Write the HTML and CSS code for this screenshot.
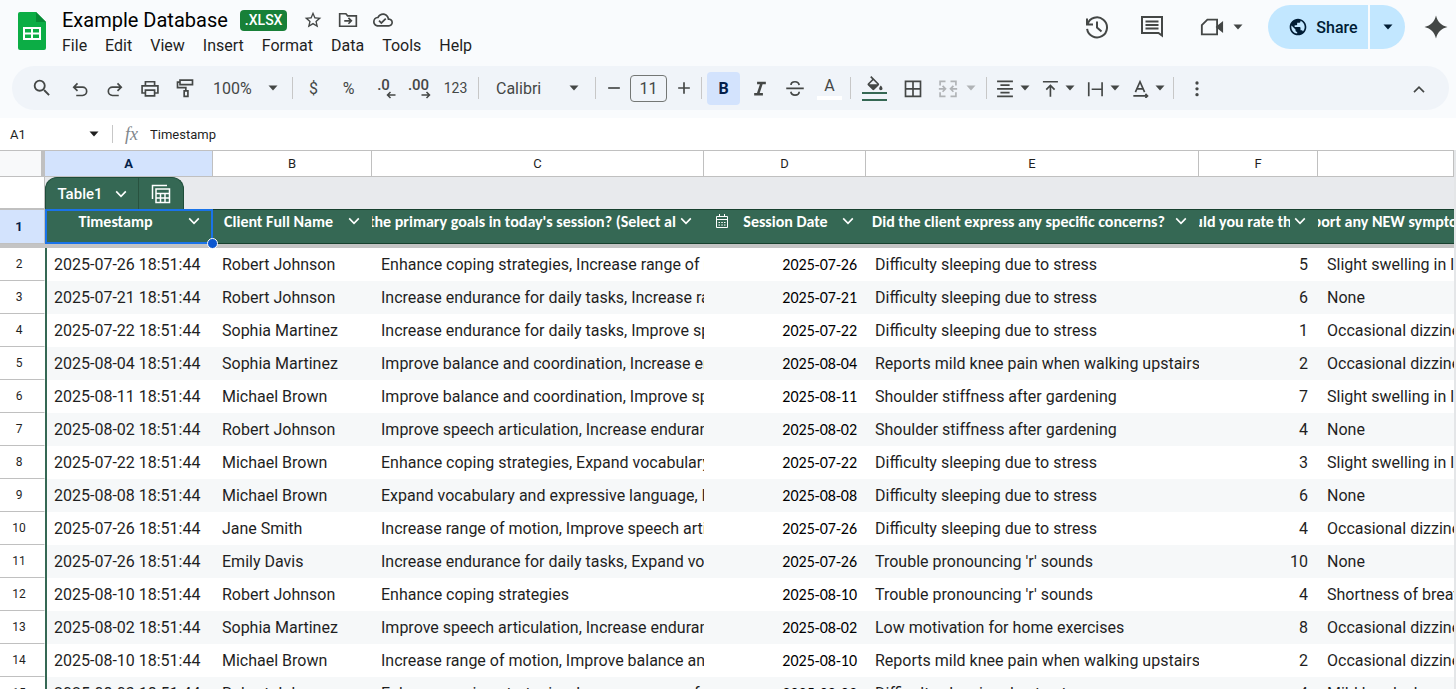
FILE: index.html
```html
<!DOCTYPE html>
<html lang="en">
<head>
  <meta charset="UTF-8">
  <meta name="viewport" content="width=device-width, initial-scale=1">
  <title>Example Database</title>
  <link rel="stylesheet" href="styles.css">
</head>
<body>
  <!-- shared icons -->
  <svg class="defs" aria-hidden="true">
    <symbol id="caret" viewBox="0 0 10 10"><path d="M0.5 2.5h9L5 7.5z" fill="currentColor"/></symbol>
    <symbol id="chevron" viewBox="0 0 12 12"><path d="M1.2 3.4 6 8.4l4.8-5" fill="none" stroke="currentColor" stroke-width="1.6"/></symbol>
  </svg>

  <header class="top">
    <svg class="logo" viewBox="0 0 28 38" aria-hidden="true">
      <path d="M2 0h16l10 10v26a2 2 0 0 1-2 2H2a2 2 0 0 1-2-2V2a2 2 0 0 1 2-2z" fill="#0cad45"/>
      <path d="M18 0l10 10H18z" fill="#078a35"/>
      <path d="M5 15h18v13H5zM7 17v3.500h6V17zm8 0v3.500h6V17zm-8 5.500V26h6v-3.500zm8 0V26h6v-3.500z" fill="#fff" fill-rule="evenodd"/>
    </svg>
    <div class="doc">
      <div class="doc-title">
        <h1>Example Database</h1>
        <span class="badge">.XLSX</span>
        <button class="mini" aria-label="Star"><svg viewBox="0 0 24 24"><path d="M22 9.24l-7.19-.62L12 2 9.19 8.63 2 9.24l5.46 4.73L5.82 21 12 17.27 18.18 21l-1.63-7.03L22 9.24zM12 15.4l-3.76 2.27 1-4.28-3.32-2.88 4.38-.38L12 6.100l1.71 4.040 4.38.38-3.32 2.88 1 4.280L12 15.4z"/></svg></button>
        <button class="mini" aria-label="Move"><svg class="line" viewBox="0 0 24 24"><path d="M2 5v14.500h20V7H11.500l-2-2.500H2zM7.500 13h8M12.500 9.500l3.500 3.500-3.500 3.500"/></svg></button>
        <button class="mini" aria-label="Saved"><svg viewBox="0 0 24 24"><path d="M19.35 10.04C18.67 6.59 15.64 4 12 4 9.11 4 6.6 5.64 5.35 8.04 2.34 8.36 0 10.91 0 14c0 3.31 2.69 6 6 6h13c2.76 0 5-2.24 5-5 0-2.64-2.05-4.78-4.65-4.96zM19 18H6c-2.21 0-4-1.79-4-4 0-2.05 1.53-3.76 3.56-3.97l1.07-.11.5-.95C8.08 7.14 9.94 6 12 6c2.62 0 4.88 1.86 5.39 4.43l.3 1.5 1.53.11c1.56.1 2.78 1.41 2.78 2.96 0 1.65-1.35 3-3 3zm-9-3.82l-2.09-2.09L6.5 13.5 10 17l6.010-6.010-1.410-1.410z"/></svg></button>
      </div>
      <nav class="menu">
        <a href="#">File</a>
        <a href="#">Edit</a>
        <a href="#">View</a>
        <a href="#">Insert</a>
        <a href="#">Format</a>
        <a href="#">Data</a>
        <a href="#">Tools</a>
        <a href="#">Help</a>
      </nav>
    </div>
    <div class="actions">
      <button class="action" aria-label="Version history"><svg class="line" viewBox="0 0 24 24"><path d="M2 3.500v6h6M2.500 9.300a10 10 0 1 1-.4 4.500M12 6.500v6l4.500 4"/></svg></button>
      <button class="action comments" aria-label="Comments"><svg class="line" viewBox="0 0 24 24"><path d="M2 2h20v18.500L18.500 18H2zM5.500 6.500h13M5.500 10h13M5.500 13.500h13"/></svg></button>
      <button class="action meet" aria-label="Join a call"><svg class="line" viewBox="0 0 26 24"><path d="M8 4h10.500v16H2V10z"/><path d="M18.500 12 24 7.500v9z" fill="currentColor"/></svg><svg class="caret"><use href="#caret"/></svg></button>
      <div class="share">
        <button class="share-main"><svg viewBox="0 0 24 24"><path d="M12 2C6.48 2 2 6.48 2 12s4.48 10 10 10 10-4.48 10-10S17.52 2 12 2zm-1 17.93c-3.95-.49-7-3.85-7-7.93 0-.62.08-1.21.21-1.79L9 15v1c0 1.1.9 2 2 2v1.93zm6.9-2.54c-.26-.81-1-1.39-1.9-1.39h-1v-3c0-.55-.45-1-1-1H8v-2h2c.55 0 1-.45 1-1V7h2c1.1 0 2-.9 2-2v-.41c2.93 1.19 5 4.06 5 7.41 0 2.08-.8 3.97-2.1 5.39z"/></svg>Share</button>
        <button class="share-more" aria-label="Sharing options"><svg class="caret"><use href="#caret"/></svg></button>
      </div>
      <button class="action spark" aria-label="Ask Gemini"><svg viewBox="0 0 24 24"><path d="M12 0.500C13.600 7 17 10.400 23.500 12 17 13.600 13.600 17 12 23.500 10.400 17 7 13.600.5 12 7 10.400 10.400 7 12 .5z"/></svg></button>
    </div>
  </header>

  <div class="toolbar" role="toolbar">
    <button class="tool search" aria-label="Search"><svg viewBox="0 0 24 24"><path d="M15.5 14h-.79l-.28-.27A6.47 6.47 0 0 0 16 9.5 6.5 6.5 0 1 0 9.5 16c1.61 0 3.09-.59 4.23-1.57l.27.28v.79l5 4.99L20.49 19l-4.99-5zm-6 0C7.01 14 5 11.99 5 9.5S7.01 5 9.5 5 14 7.01 14 9.5 11.99 14 9.5 14z"/></svg></button>
    <button class="tool" aria-label="Undo"><svg class="line" viewBox="0 0 24 24"><path d="M7.500 21H15a5 5 0 0 0 0-10H5M9 6.500 4.500 11 9 15.500"/></svg></button>
    <button class="tool" aria-label="Redo"><svg class="line" viewBox="0 0 24 24"><path d="M16.500 21H9a5 5 0 0 1 0-10h10M15 6.500l4.500 4.500-4.500 4.500"/></svg></button>
    <button class="tool" aria-label="Print"><svg class="line" viewBox="0 0 24 24"><path d="M6.500 9V4.500h11V9M6.500 18H2.500V9.500h19V18h-4M6.500 14.500h11v7h-11z"/></svg></button>
    <button class="tool" aria-label="Paint format"><svg class="line" viewBox="0 0 24 24"><path d="M6 2.500h15V8H6zM6 5H3v6.500h10V15M11 15.500h4.500v6.500H11z"/></svg></button>
    <button class="zoom-select">100%<svg class="caret"><use href="#caret"/></svg></button>
    <span class="sep"></span>
    <button class="tool" aria-label="Currency">$</button>
    <button class="tool" aria-label="Percent">%</button>
    <button class="tool decimal" aria-label="Decrease decimals">.0<svg class="line" viewBox="0 0 10 8"><path d="M9.500 4H1.500M4.500 1 1.500 4l3 3"/></svg></button>
    <button class="tool decimal" aria-label="Increase decimals">.00<svg class="line" viewBox="0 0 10 8"><path d="M.5 4h8M5.500 1l3 3-3 3"/></svg></button>
    <button class="tool formats" aria-label="More formats">123</button>
    <span class="sep"></span>
    <button class="font-select">Calibri<svg class="caret"><use href="#caret"/></svg></button>
    <span class="sep"></span>
    <button class="tool step" aria-label="Smaller"><svg class="line" viewBox="0 0 24 24"><path d="M5 12h14"/></svg></button>
    <input class="size" type="text" value="11" aria-label="Font size">
    <button class="tool step" aria-label="Larger"><svg class="line" viewBox="0 0 24 24"><path d="M5 12h14M12 5v14"/></svg></button>
    <span class="sep"></span>
    <button class="tool bold">B</button>
    <button class="tool" aria-label="Italic"><svg class="line heavy" viewBox="0 0 24 24"><path d="M8.500 6h10.500M5 19.500h10.500M14 6l-4.500 13.500"/></svg></button>
    <button class="tool" aria-label="Strikethrough"><svg class="line" viewBox="0 0 24 24"><path d="M1.500 12.500h21M17 8.500C16.500 5.500 14.500 4.500 12 4.500S7.200 5.800 7.200 8.500M7 16.500c.5 3 2.500 4 5 4s5-1.200 5-4"/></svg></button>
    <button class="tool text-color" aria-label="Text color">A</button>
    <span class="sep"></span>
    <button class="tool fill-color" aria-label="Fill color"><svg viewBox="0 0 24 18"><path d="M16.56 8.94L7.62 0 6.21 1.41l2.38 2.38-5.15 5.15c-.59.59-.59 1.54 0 2.12l5.500 5.500c.29.29.68.44 1.060.44s.77-.15 1.060-.44l5.500-5.500c.59-.58.59-1.53 0-2.120zM5.210 10L10 5.210 14.790 10H5.210zM19 11.500s-2 2.170-2 3.500c0 1.100.9 2 2 2s2-.9 2-2c0-1.330-2-3.500-2-3.500z"/></svg></button>
    <button class="tool borders" aria-label="Borders"><svg class="line" viewBox="0 0 24 24"><path d="M3 4h18v18H3zM12 4v18M3 13h18"/></svg></button>
    <button class="drop merge" aria-label="Merge cells" disabled><svg class="line" viewBox="0 0 24 24"><path d="M9 4H2.500v5M15 4h6.500v5M9 22H2.500v-5M15 22h6.500v-5M1 13h7M5.500 9.500 9 13l-3.500 3.500M23 13h-7M18.500 9.500 15 13l3.500 3.500"/></svg><svg class="caret"><use href="#caret"/></svg></button>
    <span class="sep"></span>
    <button class="drop" aria-label="Horizontal align"><svg class="line" viewBox="0 0 24 24"><path d="M2.500 4h19M6.500 8.500h11M2.500 13h19M6.500 17.500h11M2.500 22h19"/></svg><svg class="caret"><use href="#caret"/></svg></button>
    <button class="drop" aria-label="Vertical align"><svg class="line" viewBox="0 0 24 24"><path d="M3.500 4.500h18M12.500 22.500V9M7.500 14l5-5 5 5"/></svg><svg class="caret"><use href="#caret"/></svg></button>
    <button class="drop" aria-label="Text wrapping"><svg class="line" viewBox="0 0 24 24"><path d="M4.500 5v17M20.500 5v17M8 13.500H20"/></svg><svg class="caret"><use href="#caret"/></svg></button>
    <button class="drop" aria-label="Text rotation"><svg class="line" viewBox="0 0 24 24"><path d="M6.500 17 12 4.500 17.500 17M8.500 13h7M4 21.500h17M18.500 19l2.500 2.500-2.500 2.500"/></svg><svg class="caret"><use href="#caret"/></svg></button>
    <span class="sep"></span>
    <button class="tool more" aria-label="More"><svg viewBox="0 0 24 24"><circle cx="12" cy="6" r="2"/><circle cx="12" cy="13" r="2"/><circle cx="12" cy="20" r="2"/></svg></button>
    <button class="tool collapse" aria-label="Hide the menus"><svg class="line" viewBox="0 0 24 24"><path d="M6 17l6-6 6 6"/></svg></button>
  </div>

  <div class="formula-bar">
    <button class="name-box">A1<svg class="caret"><use href="#caret"/></svg></button>
    <label class="fx" for="formula">fx</label>
    <input class="formula" id="formula" type="text" value="Timestamp">
  </div>

  <table class="sheet">
    <colgroup>
      <col class="col-n"><col class="col-a"><col class="col-b"><col class="col-c"><col class="col-d"><col class="col-e"><col class="col-f"><col>
    </colgroup>
    <thead>
      <tr class="letters">
        <th class="corner"></th><th class="selected">A</th><th>B</th><th>C</th><th>D</th><th>E</th><th>F</th><th></th>
      </tr>
      <tr class="tab-row">
        <th></th>
        <td colspan="7">
          <div class="tab">
            <button class="tab-name">Table1<svg class="chevron"><use href="#chevron"/></svg></button>
            <button class="tab-icon" aria-label="Table view"><svg class="line" viewBox="0 0 20 20"><path d="M1.500 15V1.500H16M5 5h13.500v13.500H5zM5 9.500h13.500M5 14h13.500M9.500 9.500v9M14 9.500v9"/></svg></button>
          </div>
        </td>
      </tr>
      <tr class="fields">
        <th class="selected">1</th>
        <th class="active"><div class="field"><span>Timestamp</span><svg class="chevron"><use href="#chevron"/></svg></div><i class="handle"></i></th>
        <th><div class="field"><span>Client Full Name</span><svg class="chevron"><use href="#chevron"/></svg></div></th>
        <th><div class="field"><span>What were the primary goals in today's session? (Select all that apply)</span><svg class="chevron"><use href="#chevron"/></svg></div></th>
        <th><div class="field"><svg class="line calendar" viewBox="0 0 14 16"><path d="M1.500 3.500h11v11h-11zM1.500 6.500h11M4.500 1v2.500M9.500 1v2.500M3.500 9.500h1.500M6.300 9.500h1.500M9 9.500h1.500M3.500 12h1.500M6.300 12h1.500M9 12h1.500"/></svg><span>Session Date</span><svg class="chevron"><use href="#chevron"/></svg></div></th>
        <th><div class="field"><span>Did the client express any specific concerns?</span><svg class="chevron"><use href="#chevron"/></svg></div></th>
        <th><div class="field"><span>How would you rate their pain?</span><svg class="chevron"><use href="#chevron"/></svg></div></th>
        <th><div class="field last"><span>Did the client report any NEW symptoms or concerns?</span></div></th>
      </tr>
      <tr class="freeze"><td colspan="8"></td></tr>
    </thead>
    <tbody>
      <tr><th>2</th><td>2025-07-26 18:51:44</td><td>Robert Johnson</td><td>Enhance coping strategies, Increase range of motion</td><td>2025-07-26</td><td>Difficulty sleeping due to stress</td><td>5</td><td>Slight swelling in left ankle</td></tr>
      <tr><th>3</th><td>2025-07-21 18:51:44</td><td>Robert Johnson</td><td>Increase endurance for daily tasks, Increase range of motion</td><td>2025-07-21</td><td>Difficulty sleeping due to stress</td><td>6</td><td>None</td></tr>
      <tr><th>4</th><td>2025-07-22 18:51:44</td><td>Sophia Martinez</td><td>Increase endurance for daily tasks, Improve speech articulation</td><td>2025-07-22</td><td>Difficulty sleeping due to stress</td><td>1</td><td>Occasional dizziness</td></tr>
      <tr><th>5</th><td>2025-08-04 18:51:44</td><td>Sophia Martinez</td><td>Improve balance and coordination, Increase endurance for daily tasks</td><td>2025-08-04</td><td>Reports mild knee pain when walking upstairs</td><td>2</td><td>Occasional dizziness</td></tr>
      <tr><th>6</th><td>2025-08-11 18:51:44</td><td>Michael Brown</td><td>Improve balance and coordination, Improve speech articulation</td><td>2025-08-11</td><td>Shoulder stiffness after gardening</td><td>7</td><td>Slight swelling in left ankle</td></tr>
      <tr><th>7</th><td>2025-08-02 18:51:44</td><td>Robert Johnson</td><td>Improve speech articulation, Increase endurance for daily tasks</td><td>2025-08-02</td><td>Shoulder stiffness after gardening</td><td>4</td><td>None</td></tr>
      <tr><th>8</th><td>2025-07-22 18:51:44</td><td>Michael Brown</td><td>Enhance coping strategies, Expand vocabulary and expressive language</td><td>2025-07-22</td><td>Difficulty sleeping due to stress</td><td>3</td><td>Slight swelling in left ankle</td></tr>
      <tr><th>9</th><td>2025-08-08 18:51:44</td><td>Michael Brown</td><td>Expand vocabulary and expressive language, Increase range of motion</td><td>2025-08-08</td><td>Difficulty sleeping due to stress</td><td>6</td><td>None</td></tr>
      <tr><th>10</th><td>2025-07-26 18:51:44</td><td>Jane Smith</td><td>Increase range of motion, Improve speech articulation</td><td>2025-07-26</td><td>Difficulty sleeping due to stress</td><td>4</td><td>Occasional dizziness</td></tr>
      <tr><th>11</th><td>2025-07-26 18:51:44</td><td>Emily Davis</td><td>Increase endurance for daily tasks, Expand vocabulary and expressive language</td><td>2025-07-26</td><td>Trouble pronouncing 'r' sounds</td><td>10</td><td>None</td></tr>
      <tr><th>12</th><td>2025-08-10 18:51:44</td><td>Robert Johnson</td><td>Enhance coping strategies</td><td>2025-08-10</td><td>Trouble pronouncing 'r' sounds</td><td>4</td><td>Shortness of breath</td></tr>
      <tr><th>13</th><td>2025-08-02 18:51:44</td><td>Sophia Martinez</td><td>Improve speech articulation, Increase endurance for daily tasks</td><td>2025-08-02</td><td>Low motivation for home exercises</td><td>8</td><td>Occasional dizziness</td></tr>
      <tr><th>14</th><td>2025-08-10 18:51:44</td><td>Michael Brown</td><td>Increase range of motion, Improve balance and coordination</td><td>2025-08-10</td><td>Reports mild knee pain when walking upstairs</td><td>2</td><td>Occasional dizziness</td></tr>
      <tr><th>15</th><td>2025-08-03 18:51:44</td><td>Robert Johnson</td><td>Enhance coping strategies, Increase range of motion</td><td>2025-08-03</td><td>Difficulty sleeping due to stress</td><td>4</td><td>Mild headache</td></tr>
    </tbody>
  </table>
</body>
</html>
```
FILE: styles.css
```css
* {
  box-sizing: border-box;
}
body {
  margin: 0;
  height: 100vh;
  overflow: hidden;
  background-color: #f9fbfd;
  color: #1f1f1f;
  font-family: Roboto, Arial, sans-serif;
  font-size: 16px;
}
button,
input {
  margin: 0;
  padding: 0;
  border: none;
  background: none;
  color: inherit;
  font: inherit;
}
button {
  display: flex;
  align-items: center;
  justify-content: center;
  flex-shrink: 0;
  cursor: pointer;
}
svg {
  display: block;
  flex-shrink: 0;
  fill: currentColor;
}
svg.line {
  fill: none;
  stroke: currentColor;
  stroke-width: 2;
}
svg.heavy {
  stroke-width: 3;
}
svg.defs {
  position: absolute;
  width: 0;
  height: 0;
}
svg.caret {
  width: 10px;
  height: 10px;
}
svg.chevron {
  width: 12px;
  height: 12px;
}

/* title and menus */
.top {
  display: flex;
  height: 66px;
  padding-left: 18px;
}
.logo {
  width: 28px;
  height: 38px;
  margin-top: 12px;
}
.doc {
  margin-left: 16px;
  padding-top: 8px;
}
.doc-title {
  display: flex;
  align-items: center;
  height: 24px;
}
h1 {
  margin: 0 12px 0 0;
  font-size: 20px;
  font-weight: 400;
  color: #000;
}
.badge {
  margin-right: 16px;
  padding: 0 5px;
  border-radius: 4px;
  background-color: #188038;
  color: #fff;
  font-size: 14px;
  font-weight: 500;
  line-height: 21px;
}
.mini {
  width: 20px;
  height: 20px;
  margin-right: 15px;
  color: #444746;
}
.mini svg {
  width: 20px;
  height: 20px;
}
.menu {
  display: flex;
  gap: 18px;
  padding-top: 4px;
}
.menu a {
  color: #1f1f1f;
  line-height: 20px;
  text-decoration: none;
}
.actions {
  display: flex;
  align-items: center;
  height: 44px;
  margin: 5px 8px 0 auto;
  color: #444746;
}
.action svg {
  width: 24px;
  height: 24px;
}
.comments {
  margin-left: 31px;
}
.meet {
  margin-left: 36px;
  gap: 9px;
}
.meet .caret {
  width: 10px;
  height: 10px;
}
.share {
  display: flex;
  gap: 2px;
  height: 44px;
  margin: 0 19px 0 25px;
  color: #001d35;
}
.share-main {
  gap: 8px;
  width: 100px;
  padding-left: 10px;
  border-radius: 22px 0 0 22px;
  background-color: #c2e7ff;
  font-weight: 500;
}
.share-main svg {
  width: 20px;
  height: 20px;
}
.share-more {
  width: 35px;
  border-radius: 0 22px 22px 0;
  background-color: #c2e7ff;
}

/* toolbar */
.toolbar {
  display: flex;
  align-items: center;
  height: 44px;
  margin: 0 7px 8px 12px;
  padding: 0 13px 0 10px;
  border-radius: 22px;
  background-color: #f0f4f9;
  color: #444746;
}
.tool {
  width: 35px;
  height: 33px;
  border-radius: 4px;
}
.tool svg {
  width: 20px;
  height: 20px;
}
.search {
  width: 40px;
}
.search svg {
  width: 22px;
  height: 22px;
}
.zoom-select {
  justify-content: space-between;
  width: 87px;
  padding: 0 11px 0 11px;
}
.sep {
  flex-shrink: 0;
  width: 1px;
  height: 22px;
  margin: 0 3px;
  background-color: #c7c7c7;
}
.decimal {
  flex-direction: column;
  font-size: 15px;
  font-weight: 500;
  line-height: 14px;
}
.decimal .line {
  width: 10px;
  height: 8px;
  margin: -1px 0 0 14px;
  stroke-width: 1.5;
}
.formats {
  width: 39px;
  font-size: 14px;
}
.font-select {
  justify-content: space-between;
  width: 110px;
  padding: 0 13px 0 14px;
}
.step {
  width: 29px;
}
.size {
  width: 37px;
  height: 27px;
  margin: 0 2px;
  border: 1px solid #747775;
  border-radius: 4px;
  text-align: center;
}
.bold {
  width: 33px;
  margin: 0 2px;
  background-color: #d3e3fd;
  color: #041e49;
  font-weight: 700;
}
.text-color {
  height: 24px;
  padding-bottom: 4px;
  background-image: linear-gradient(#fff, #fff);
  background-position: center bottom;
  background-repeat: no-repeat;
  background-size: 25px 4px;
  line-height: 20px;
}
.fill-color {
  flex-direction: column;
  width: 41px;
}
.fill-color::after {
  content: "";
  width: 25px;
  height: 5px;
  border-top: 2px solid #356854;
  border-bottom: 2px solid #356854;
}
.fill-color svg {
  height: 17px;
}
.borders {
  width: 36px;
}
.drop {
  gap: 5px;
  width: 45px;
  height: 33px;
}
.drop .line {
  width: 20px;
  height: 20px;
}
.merge {
  gap: 8px;
  width: 52px;
  color: #b0b3b6;
}
.more {
  margin-left: 2px;
}
.collapse {
  margin-left: auto;
}

/* formula bar */
.formula-bar {
  display: flex;
  align-items: center;
  height: 32px;
  background-color: #fff;
  font-size: 13px;
}
.name-box {
  justify-content: space-between;
  width: 113px;
  height: 18px;
  padding: 0 13px 0 10px;
  border-right: 1px solid #c7c7c7;
}
.fx {
  width: 37px;
  padding-left: 12px;
  color: #80868b;
  font-family: "Liberation Serif", serif;
  font-size: 18px;
  font-style: italic;
}
.formula {
  flex: 1;
}

/* grid */
.sheet {
  width: 100%;
  border-collapse: separate;
  border-spacing: 0;
  border-right: 2px solid #e4e6e8;
  background-color: #fff;
  table-layout: fixed;
}
.col-n {
  width: 45px;
}
.col-a {
  width: 168px;
}
.col-b {
  width: 159px;
}
.col-c {
  width: 332px;
}
.col-d {
  width: 162px;
}
.col-e {
  width: 333px;
}
.col-f {
  width: 119px;
}
.sheet th,
.sheet td {
  padding: 0;
}
.letters th {
  height: 27px;
  border-top: 1px solid #c0c0c0;
  border-right: 1px solid #c0c0c0;
  border-bottom: 1px solid #c0c0c0;
  font-size: 13px;
  font-weight: 400;
}
.letters .corner {
  border-right: 4px solid #c0c0c0;
  background-color: #f8f9fa;
}
.sheet .selected {
  background-color: #d3e3fd;
  color: #041e49;
  font-weight: 700;
}
.tab-row th,
.fields .selected {
  border-right: 1px solid #c0c0c0;
  border-bottom: 1px solid #c0c0c0;
}
.tab-row td {
  height: 32px;
  background-color: #e8eaed;
}
.tab {
  display: flex;
  width: 139px;
  height: 32px;
  border: 1px solid #1e4d3a;
  border-bottom: none;
  border-radius: 12px 12px 0 0;
  background-color: #356854;
  color: #fff;
}
.tab-name {
  gap: 12px;
  width: 93px;
  border-right: 1px solid #28523f;
  font-size: 15px;
  font-weight: 500;
}
.tab-icon {
  flex: 1;
}
.tab-icon svg {
  width: 20px;
  height: 20px;
  stroke-width: 1.5;
}
.fields th {
  position: relative;
  height: 35px;
  border-top: 1px solid #17402e;
  border-bottom: 1px solid #17402e;
  background-color: #356854;
  color: #fff;
  font-family: Carlito, "Open Sans", sans-serif;
  font-size: 16px;
}
.fields .selected {
  border-top-color: #c0c0c0;
  font-family: Roboto, Arial, sans-serif;
  font-size: 13px;
}
.fields .active {
  border: 2px solid #1a73e8;
}
.handle {
  position: absolute;
  right: -7px;
  bottom: -7px;
  z-index: 1;
  width: 11px;
  height: 11px;
  border: 1px solid #fff;
  border-radius: 50%;
  background-color: #0b57d0;
}
.field {
  display: flex;
  align-items: center;
  gap: 4px;
  height: 22px;
  margin-bottom: 11px;
  padding-right: 12px;
}
.active .field {
  height: 20px;
  padding-right: 11px;
}
.field span {
  display: flex;
  flex: 1;
  justify-content: center;
  min-width: 0;
  overflow: hidden;
  white-space: nowrap;
}
.sheet .last {
  padding-right: 0;
}
svg.calendar {
  width: 14px;
  height: 16px;
  margin-left: 11px;
  stroke-width: 1;
}
.freeze td {
  height: 4px;
  background-color: #c4c4c4;
}
tbody th {
  height: 33px;
  border-right: 1px solid #fff;
  border-bottom: 1px solid #c0c0c0;
  font-size: 12px;
  font-weight: 400;
}
.sheet th:first-child {
  padding-right: 6px;
}
.sheet tbody td {
  padding: 0 0 0 9px;
  overflow: hidden;
  white-space: nowrap;
}
.sheet tbody td:nth-child(2) {
  padding-left: 7px;
  border-left: 2px solid #356854;
}
.sheet tbody td:nth-child(5) {
  padding-right: 9px;
  color: #000;
  font-family: Carlito, "Open Sans", sans-serif;
  text-align: right;
}
.sheet tbody td:nth-child(7) {
  padding-right: 10px;
  text-align: right;
}
tbody tr:nth-child(even) td {
  background-color: #f6f8f9;
}
```
